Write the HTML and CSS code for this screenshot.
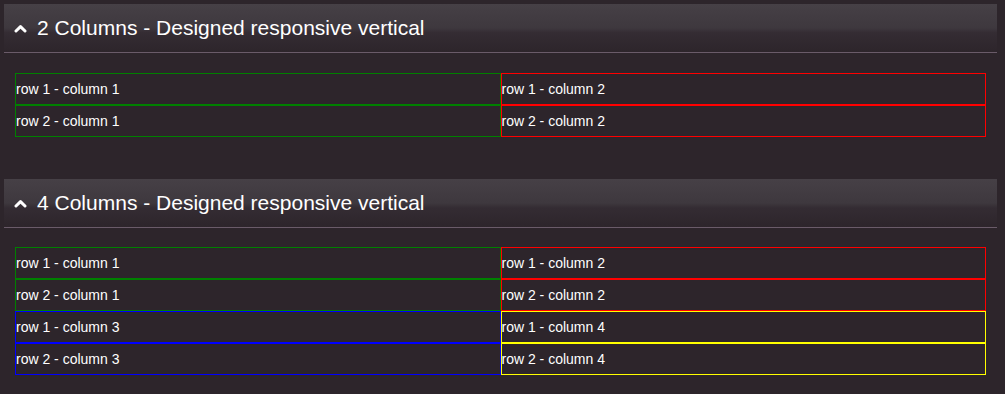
FILE: index.html
```html
<!DOCTYPE html>
<html>
<head>
<meta charset="utf-8">
<link rel="stylesheet" href="styles.css">
</head>
<body>
  <section class="panel">
    <div class="panel-header">
      <svg class="chevron" width="13" height="9" viewBox="0 0 13 9"><path d="M2 7 L6.5 2.6 L11 7" fill="none" stroke="#fff" stroke-width="3" stroke-linecap="round" stroke-linejoin="round"/></svg>
      <h2 class="panel-title">2 Columns - Designed responsive vertical</h2>
    </div>
    <div class="grid">
      <div class="col c-green">
        <div class="cell">row 1 - column 1</div>
        <div class="cell">row 2 - column 1</div>
      </div>
      <div class="col c-red">
        <div class="cell">row 1 - column 2</div>
        <div class="cell">row 2 - column 2</div>
      </div>
    </div>
  </section>
  <section class="panel second">
    <div class="panel-header">
      <svg class="chevron" width="13" height="9" viewBox="0 0 13 9"><path d="M2 7 L6.5 2.6 L11 7" fill="none" stroke="#fff" stroke-width="3" stroke-linecap="round" stroke-linejoin="round"/></svg>
      <h2 class="panel-title">4 Columns - Designed responsive vertical</h2>
    </div>
    <div class="grid">
      <div class="col c-green">
        <div class="cell">row 1 - column 1</div>
        <div class="cell">row 2 - column 1</div>
      </div>
      <div class="col c-red">
        <div class="cell">row 1 - column 2</div>
        <div class="cell">row 2 - column 2</div>
      </div>
      <div class="col c-blue">
        <div class="cell">row 1 - column 3</div>
        <div class="cell">row 2 - column 3</div>
      </div>
      <div class="col c-yellow">
        <div class="cell">row 1 - column 4</div>
        <div class="cell">row 2 - column 4</div>
      </div>
    </div>
  </section>
</body>
</html>
```
FILE: styles.css
```css
html, body {
  margin: 0;
  background: #2d252b;
}
body {
  padding: 4px 8px 0 4px;
  font-family: "Liberation Sans", Arial, sans-serif;
  color: #fff;
}
.panel-header {
  height: 48px;
  display: flex;
  align-items: center;
  padding-left: 10px;
  border-bottom: 1px solid #6a5b69;
  background: linear-gradient(to bottom, #464046 0%, #3e383e 50%, #342c33 60%, #2d252b 100%);
}
.chevron {
  display: block;
  margin-right: 10px;
  margin-top: 1px;
}
.panel-title {
  margin: 0;
  font-size: 21px;
  font-weight: normal;
  line-height: 24px;
}
.second {
  margin-top: 42px;
}
.grid {
  display: grid;
  grid-template-columns: 1fr 1fr;
  margin: 20px 11px 0 11px;
}
.second .grid {
  margin-top: 19px;
}
.cell {
  height: 30px;
  line-height: 30px;
  font-size: 14px;
  border: 1px solid;
  white-space: nowrap;
}
.c-green .cell { border-color: #008000; }
.c-red .cell { border-color: #ff0000; }
.c-blue .cell { border-color: #0000ff; }
.c-yellow .cell { border-color: #ffff00; }
```
